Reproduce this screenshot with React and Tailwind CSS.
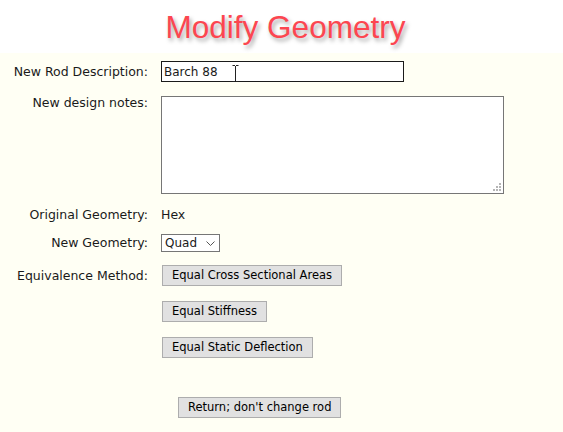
import {useState} from "react";

const Label = ({children, className = ""}) => (
  <div className={"text-right pr-[13px] " + className}>{children}</div>
);

const Btn = ({children, className = ""}) => (
  <button
    type="button"
    className={
      "h-[21px] px-[9px] bg-[#e1e1e1] border border-[#adadad] text-[11.5px] text-black leading-none " +
      className
    }
  >
    {children}
  </button>
);

export default function App() {
  const [desc, setDesc] = useState("Barch 88");
  const [geom, setGeom] = useState("Quad");

  return (
    <div className="min-h-[432px] bg-[#fffff4] font-['DejaVu_Sans',sans-serif] text-[12.5px] text-[#1a1a1a]">
      <div className="h-[53px] bg-white flex justify-center pt-[12px] pl-[8px]">
        <h1 className="font-['Liberation_Sans',Arial,sans-serif] text-[31.5px] leading-none text-[#fc4650] [text-shadow:2px_3px_4px_rgba(0,0,0,0.35)]">
          Modify Geometry
        </h1>
      </div>

      <div className="grid grid-cols-[161px_1fr] pt-[8px]">
        <Label className="h-[21px] leading-[21px]">New Rod Description:</Label>
        <div className="relative">
          <input
            value={desc}
            onChange={(e) => setDesc(e.target.value)}
            className="w-[243px] h-[21px] border border-[#1a1a1a] bg-white px-[2px] text-[12px] outline-none"
          />
          <svg className="absolute left-[71px] top-[4px]" width="7" height="17" viewBox="0 0 7 17">
            <path d="M0.5 0.5h2.5M4 0.5h2.5M3.5 1v15M0.5 16.5h2.5M4 16.5h2.5" stroke="#222" strokeWidth="1" fill="none" />
          </svg>
        </div>

        <Label className="mt-[12px]">New design notes:</Label>
        <div className="mt-[14px] relative w-[343px] h-[98px]">
          <textarea className="w-[343px] h-[98px] resize-none border border-[#767676] bg-white outline-none block" />
          <div className="absolute right-[3px] bottom-[3px] grid grid-cols-3 gap-[1px]">
            <span className="size-[2px]"></span>
            <span className="size-[2px]"></span>
            <span className="size-[2px] bg-[#b5b5b5]"></span>
            <span className="size-[2px]"></span>
            <span className="size-[2px] bg-[#b5b5b5]"></span>
            <span className="size-[2px] bg-[#b5b5b5]"></span>
            <span className="size-[2px] bg-[#b5b5b5]"></span>
            <span className="size-[2px] bg-[#b5b5b5]"></span>
            <span className="size-[2px] bg-[#b5b5b5]"></span>
          </div>
        </div>

        <Label className="mt-[13px] leading-[16px]">Original Geometry:</Label>
        <div className="mt-[13px] leading-[16px]">Hex</div>

        <Label className="mt-[11px] h-[18px] leading-[18px]">New Geometry:</Label>
        <div className="mt-[11px] relative w-[59px] h-[18px]">
          <select
            value={geom}
            onChange={(e) => setGeom(e.target.value)}
            className="appearance-none w-[59px] h-[18px] border border-[#767676] bg-white pl-[3px] text-[12px] leading-[16px] outline-none"
          >
            <option>Quad</option>
            <option>Hex</option>
            <option>Penta</option>
          </select>
          <svg className="absolute right-[5px] top-[7px] pointer-events-none" width="9" height="5" viewBox="0 0 9 5">
            <path d="M0.5 0.5l4 4 4-4" stroke="#555" strokeWidth="1" fill="none" />
          </svg>
        </div>

        <Label className="mt-[13px] h-[21px] leading-[21px]">Equivalence Method:</Label>
        <div className="mt-[13px] flex flex-col items-start gap-[15px] pl-[1px]">
          <Btn>Equal Cross Sectional Areas</Btn>
          <Btn>Equal Stiffness</Btn>
          <Btn>Equal Static Deflection</Btn>
        </div>
      </div>

      <div className="pl-[178px] pt-[39px]">
        <Btn>Return; don't change rod</Btn>
      </div>
    </div>
  );
}
